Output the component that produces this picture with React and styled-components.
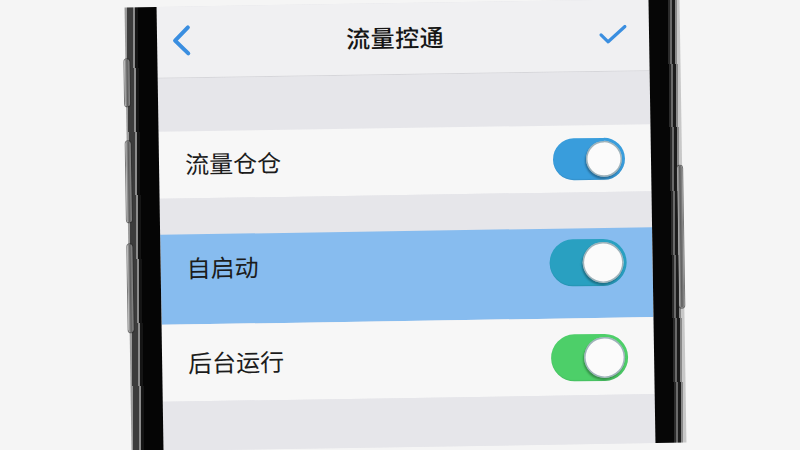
import React, { useState } from 'react';
import styled, { createGlobalStyle } from 'styled-components';

const GlobalStyle = createGlobalStyle`
    html, body {
        margin: 0;
        padding: 0;
        background: #f5f5f5;
    }
    body {
        font-family: "Noto Sans CJK SC", "Noto Sans", sans-serif;
    }
`;

const settings = [
    { id: 'pool', label: '流量仓仓', track: '#399ddc', size: 'sm', height: 67, lift: 0, gapAbove: 53 },
    { id: 'boot', label: '自启动', track: '#29a0c1', size: 'lg', height: 90, lift: -22, gapAbove: 36, highlight: true },
    { id: 'background', label: '后台运行', track: '#4dcf69', size: 'lg', height: 77, lift: 1, gapAbove: 0 },
];

const Chevron = () => (
    <svg width="20" height="32" viewBox="0 0 20 32">
        <polyline points="17,3 4,16 17,29" fill="none" stroke="#3a8ee0" strokeWidth="4" strokeLinecap="round" strokeLinejoin="round" />
    </svg>
);

const Check = () => (
    <svg width="28" height="20" viewBox="0 0 28 20">
        <polyline points="2,10 9,17 26,2" fill="none" stroke="#3a8ee0" strokeWidth="3.2" strokeLinecap="round" strokeLinejoin="round" />
    </svg>
);

const Switch = ({ on, track, size, onToggle }) => (
    <Track $on={on} $color={track} $size={size} onClick={onToggle}>
        <Knob $on={on} $size={size} $color={track} />
    </Track>
);

const App = () => {
    const [state, setState] = useState({ pool: true, boot: true, background: true });

    return (
        <>
            <GlobalStyle />
            <Stage>
                <Phone>
                    <LeftRail>
                        <SideKey $top={52} $height={47} />
                        <SideKey $top={134} $height={81} />
                        <SideKey $top={237} $height={88} />
                    </LeftRail>

                    <Screen>
                        <NavBar>
                            <NavButton>
                                <Chevron />
                            </NavButton>
                            <Title>流量控通</Title>
                            <NavButton $right>
                                <Check />
                            </NavButton>
                        </NavBar>

                        {settings.map(item => (
                            <React.Fragment key={item.id}>
                                {item.gapAbove > 0 && <Gap $height={item.gapAbove} />}
                                <Row $height={item.height} $lift={item.lift} $highlight={item.highlight}>
                                    <Label>{item.label}</Label>
                                    <Switch
                                        on={state[item.id]}
                                        track={item.track}
                                        size={item.size}
                                        onToggle={() => setState(s => ({ ...s, [item.id]: !s[item.id] }))}
                                    />
                                </Row>
                            </React.Fragment>
                        ))}

                        <Gap $fill />
                    </Screen>

                    <RightRail>
                        <SideKey $top={167} $height={142} $right />
                    </RightRail>
                </Phone>
            </Stage>
        </>
    );
};

export default App;

const Stage = styled.main`
    width: 800px;
    height: 450px;
    overflow: hidden;
    background: #f5f5f5;
    padding-top: 3px;
    box-sizing: border-box;
`;

const Phone = styled.div`
    display: flex;
    width: 555px;
    height: 444px;
    margin-left: 128px;
    transform: rotate(-0.9deg);
    transform-origin: center;
`;

const LeftRail = styled.div`
    position: relative;
    flex: 0 0 32px;
    background: linear-gradient(
        to right,
        #9a9a9a 0 2px,
        #3c3c3c 2px 8px,
        #8c8c8c 8px 10px,
        #151515 10px 13px,
        #050505 13px
    );
`;

const RightRail = styled.div`
    position: relative;
    flex: 0 0 31px;
    background: linear-gradient(
        to right,
        #060606 0 19px,
        #2b2b2b 19px 21px,
        #6a6a6a 21px 23px,
        #1c1c1c 23px 26px,
        #8a8a8a 26px 28px,
        #c8c8c8 28px 31px
    );
`;

const SideKey = styled.span`
    position: absolute;
    top: ${p => p.$top}px;
    height: ${p => p.$height}px;
    width: 5px;
    ${p => (p.$right ? 'right: 0;' : 'left: -1px;')}
    border-radius: 3px;
    background: linear-gradient(to right, #b5b5b5, #5e5e5e 50%, #8d8d8d);
    box-shadow: 0 0 0 1px rgba(40, 40, 40, 0.6);
`;

const Screen = styled.section`
    flex: 1;
    display: flex;
    flex-direction: column;
    background: #e6e6ea;
    overflow: hidden;
`;

const NavBar = styled.header`
    flex: 0 0 72px;
    box-sizing: border-box;
    display: grid;
    grid-template-columns: 1fr auto 1fr;
    align-items: center;
    padding: 0 22px 4px 14px;
    background: #f0f0f2;
    border-bottom: 1px solid #d6d6da;
`;

const NavButton = styled.span`
    display: flex;
    justify-content: ${p => (p.$right ? 'flex-end' : 'flex-start')};
    padding-top: ${p => (p.$right ? 3 : 0)}px;
`;

const Title = styled.h1`
    margin: 0 8px 0 0;
    font-size: 24px;
    font-weight: 500;
    color: #161616;
    letter-spacing: 0.5px;
`;

const Gap = styled.div`
    flex: ${p => (p.$fill ? '1' : `0 0 ${p.$height}px`)};
    background: #e6e6ea;
`;

const Row = styled.div`
    flex: 0 0 ${p => p.$height}px;
    display: flex;
    align-items: center;
    justify-content: space-between;
    box-sizing: border-box;
    padding: ${p => Math.max(p.$lift, 0)}px 26px ${p => Math.max(-p.$lift, 0)}px 26px;
    background: ${p => (p.$highlight ? '#87bcef' : '#f7f7f7')};
`;

const Label = styled.span`
    font-size: 24px;
    color: #1c1c1c;
    line-height: 1;
    margin-top: -3px;
`;

const trackSizes = {
    sm: { w: 72, h: 42, knob: 36 },
    lg: { w: 77, h: 47, knob: 41 },
};

const Track = styled.button`
    position: relative;
    flex: none;
    width: ${p => trackSizes[p.$size].w}px;
    height: ${p => trackSizes[p.$size].h}px;
    border: none;
    padding: 0;
    border-radius: 999px;
    cursor: pointer;
    background: ${p => (p.$on ? p.$color : '#d9d9dd')};
    box-shadow: inset 0 -1px 1px rgba(0, 0, 0, 0.08);
`;

const Knob = styled.span`
    position: absolute;
    top: ${p => (trackSizes[p.$size].h - trackSizes[p.$size].knob) / 2}px;
    ${p => (p.$on ? 'right: 3px;' : 'left: 3px;')}
    width: ${p => trackSizes[p.$size].knob}px;
    height: ${p => trackSizes[p.$size].knob}px;
    border-radius: 50%;
    background: #fbfbfb;
    box-shadow:
        inset 0 0 0 1.5px rgba(20, 70, 90, 0.4),
        -1px 2px 2px rgba(0, 0, 0, 0.3);
`;
